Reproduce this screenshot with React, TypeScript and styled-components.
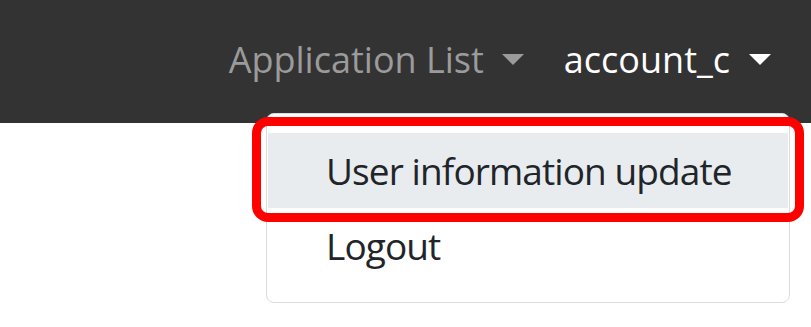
import React from "react";
import styled, { createGlobalStyle } from "styled-components";

const Global = createGlobalStyle`
  html, body { margin: 0; padding: 0; background: #ffffff; }
  body { font-family: "Open Sans", "Noto Sans", sans-serif; width: 811px; height: 327px; overflow: hidden; }
`;

const Page = styled.div`
  position: relative;
  width: 811px;
  height: 327px;
  background: #fff;
`;

const Navbar = styled.nav`
  height: 123px;
  background: #333333;
  display: flex;
  justify-content: flex-end;
  align-items: center;
  padding-right: 40px;
  gap: 40px;
  box-sizing: border-box;
`;

const NavItem = styled.div<{ $active?: boolean }>`
  display: flex;
  align-items: center;
  font-size: 36px;
  line-height: 1;
  color: ${(p) => (p.$active ? "#ffffff" : "#9b9b9b")};
  white-space: nowrap;
  padding-bottom: 4px;
`;

const Caret = styled.span<{ $active?: boolean }>`
  display: inline-block;
  margin-left: ${(p) => (p.$active ? "19px" : "18px")};
  width: 0;
  height: 0;
  border-top: 11px solid ${(p) => (p.$active ? "#ffffff" : "#9b9b9b")};
  border-left: 11px solid transparent;
  border-right: 11px solid transparent;
`;

const Menu = styled.div`
  position: absolute;
  left: 266px;
  top: 113px;
  width: 524px;
  box-sizing: border-box;
  background: #fff;
  border: 1px solid #dcdcdc;
  border-radius: 8px;
  padding: 19px 0;
  display: flex;
  flex-direction: column;
`;

const MenuItem = styled.div<{ $hover?: boolean }>`
  height: 75px;
  display: flex;
  align-items: center;
  padding-left: 58px;
  margin: 0 1px;
  font-size: 37px;
  letter-spacing: -0.9px;
  color: #212529;
  background: ${(p) => (p.$hover ? "#e9ecef" : "transparent")};
  white-space: nowrap;
`;

const Highlight = styled.div`
  position: absolute;
  left: 252px;
  top: 117px;
  width: 552px;
  height: 105px;
  box-sizing: border-box;
  border: 9px solid #ff0000;
  border-radius: 16px;
  pointer-events: none;
`;

export default function App() {
  return (
    <Page>
      <Global />
      <Navbar>
        <NavItem>
          Application List
          <Caret />
        </NavItem>
        <NavItem $active>
          account_c
          <Caret $active />
        </NavItem>
      </Navbar>
      <Menu>
        <MenuItem $hover>User information update</MenuItem>
        <MenuItem>Logout</MenuItem>
      </Menu>
      <Highlight />
    </Page>
  );
}
